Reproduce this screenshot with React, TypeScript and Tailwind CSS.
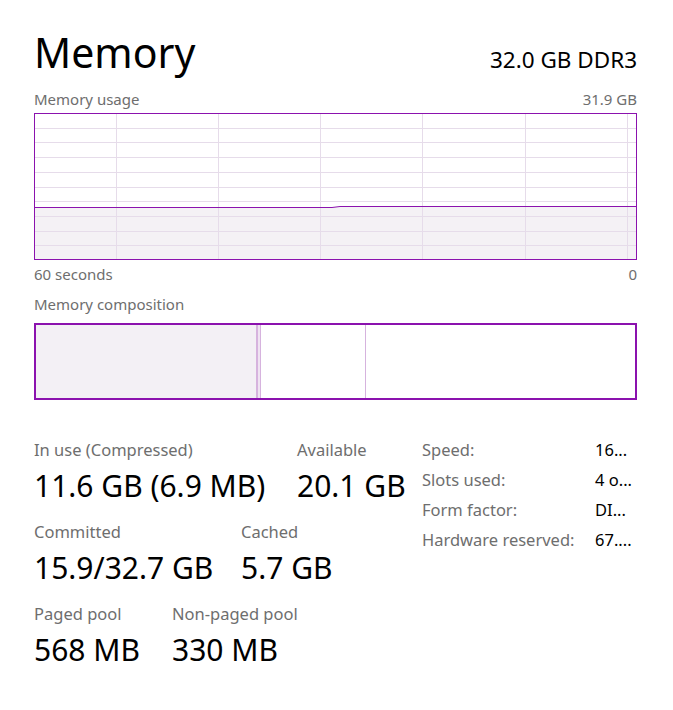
import React from 'react';

const font = { fontFamily: '"Noto Sans", "Open Sans", sans-serif' };

const W = 603;
const H = 147;
const rows = Array.from({ length: 9 }, (_, i) => (i + 1) * (H / 10));
const cols = [82, 184, 286, 388, 491, 593];

const UsageGraph: React.FC = () => (
  <svg width={W} height={H} viewBox={`0 0 ${W} ${H}`} className="block">
    <rect x={0} y={94} width={W} height={H - 94} fill="#f4f1f5" />
    {rows.map((y) => (
      <line key={y} x1={0} x2={W} y1={Math.round(y) + 0.5} y2={Math.round(y) + 0.5} stroke="#e6dcea" strokeWidth={1} />
    ))}
    {cols.map((x) => (
      <line key={x} x1={x + 0.5} x2={x + 0.5} y1={0} y2={H} stroke="#e6dcea" strokeWidth={1} />
    ))}
    <path d="M0 94.5 L298 94.5 L306 93.5 L603 93.5" fill="none" stroke="#8b12ae" strokeWidth={1} />
    <rect x={0.5} y={0.5} width={W - 1} height={H - 1} fill="none" stroke="#8b12ae" strokeWidth={1} />
  </svg>
);

const Stat: React.FC<{ label: string; value: string; className?: string }> = ({ label, value, className }) => (
  <div className={className}>
    <div className="text-[16.5px] leading-[20px] text-[#6e6e6e]">{label}</div>
    <div className="mt-[8px] text-[30px] leading-[36px] text-black">{value}</div>
  </div>
);

const props: [string, string][] = [
  ['Speed:', '16...'],
  ['Slots used:', '4 o...'],
  ['Form factor:', 'DI...'],
  ['Hardware reserved:', '67....'],
];

export default function App() {
  return (
    <div className="w-[673px] h-[710px] bg-white pl-[34px] pr-[36px] pt-[26px]" style={font}>
      <div className="flex items-baseline justify-between">
        <div className="text-[41px] leading-[52px] text-black">Memory</div>
        <div className="text-[22.5px] leading-[30px] text-black">32.0 GB DDR3</div>
      </div>

      <div className="mt-[12px] flex justify-between text-[15px] leading-[18px] text-[#6e6e6e]">
        <span>Memory usage</span>
        <span>31.9 GB</span>
      </div>
      <div className="mt-[5px]">
        <UsageGraph />
      </div>
      <div className="mt-[5px] flex justify-between text-[15px] leading-[18px] text-[#6e6e6e]">
        <span>60 seconds</span>
        <span>0</span>
      </div>

      <div className="mt-[12px] text-[15px] leading-[18px] text-[#6e6e6e]">Memory composition</div>
      <div className="mt-[10px] flex h-[77px] w-[603px] border-2 border-[#8b12ae]">
        <div className="w-[220px] bg-[#f3f0f5]" />
        <div className="w-[2px] bg-[#d6b3de]" />
        <div className="w-[2px] bg-[#efe3f2]" />
        <div className="w-[1px] bg-[#d6b3de]" />
        <div className="w-[104px] bg-white" />
        <div className="w-[1px] bg-[#d6b3de]" />
        <div className="flex-1 bg-white" />
      </div>

      <div className="mt-[40px] flex">
        <div className="w-[388px]">
          <div className="flex">
            <Stat label="In use (Compressed)" value="11.6 GB (6.9 MB)" className="w-[263px]" />
            <Stat label="Available" value="20.1 GB" />
          </div>
          <div className="mt-[18px] flex">
            <Stat label="Committed" value="15.9/32.7 GB" className="w-[207px]" />
            <Stat label="Cached" value="5.7 GB" />
          </div>
          <div className="mt-[18px] flex">
            <Stat label="Paged pool" value="568 MB" className="w-[138px]" />
            <Stat label="Non-paged pool" value="330 MB" />
          </div>
        </div>
        <div className="flex flex-col">
          {props.map(([k, v]) => (
            <div key={k} className="flex h-[30px] text-[16.5px] leading-[20px]">
              <span className="w-[173px] text-[#6e6e6e]">{k}</span>
              <span className="text-black">{v}</span>
            </div>
          ))}
        </div>
      </div>
    </div>
  );
}
